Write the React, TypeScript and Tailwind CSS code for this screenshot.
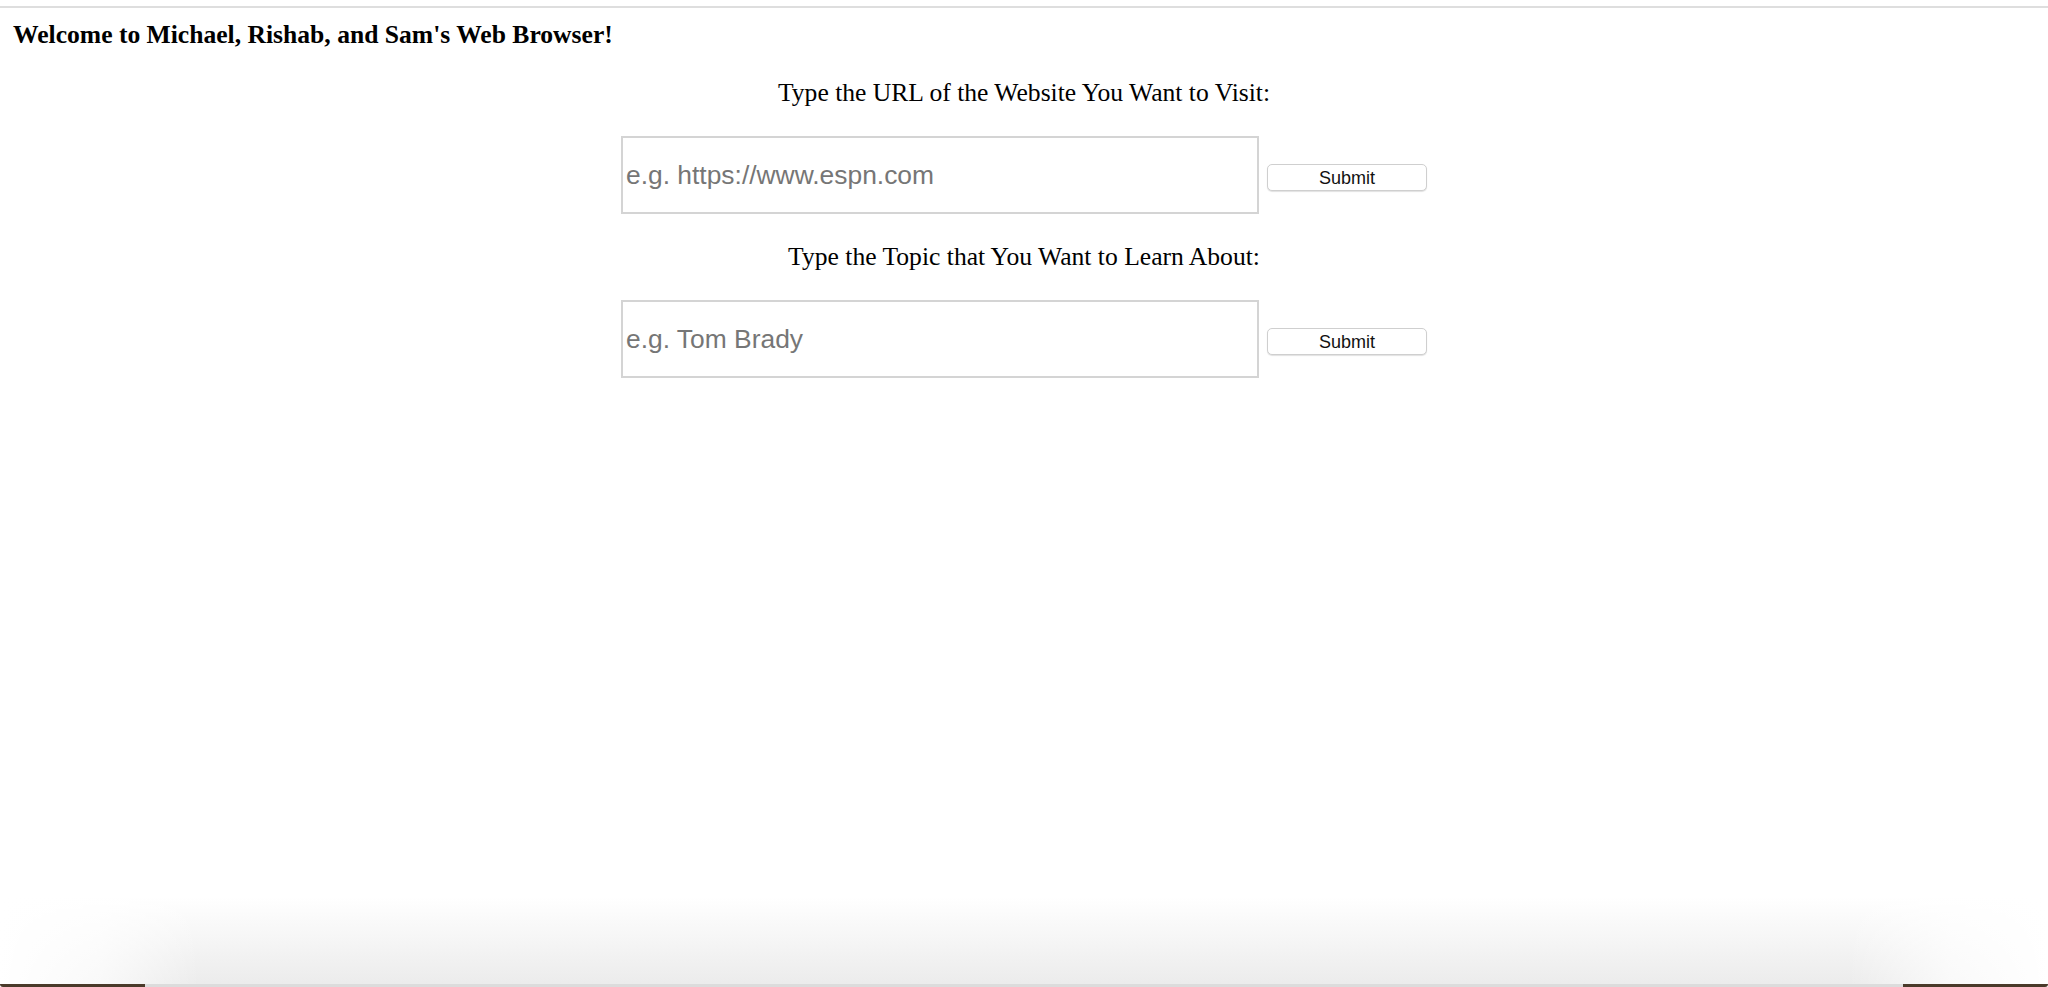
import React, { useState } from 'react';

const serif = "font-['Liberation_Serif','Times_New_Roman',serif]";
const sans = "font-['Liberation_Sans',Arial,sans-serif]";

interface SearchRowProps {
  label: string;
  placeholder: string;
  value: string;
  onChange: (v: string) => void;
  onSubmit: () => void;
}

const SearchRow: React.FC<SearchRowProps> = ({ label, placeholder, value, onChange, onSubmit }) => {
  return (
    <div className="flex flex-col items-center">
      <label className={`${serif} text-[25.6px] leading-[30px] text-black`}>{label}</label>
      <div className="flex items-center gap-[8px] mt-[28px]">
        <input
          type="text"
          placeholder={placeholder}
          value={value}
          onChange={(e) => onChange(e.target.value)}
          className={`${sans} w-[638px] h-[78px] border-2 border-[#d4d4d4] px-[3px] text-[26.4px] text-black placeholder:text-[#767676] outline-none`}
        />
        <button
          type="button"
          onClick={onSubmit}
          className={`${sans} mt-[5px] w-[160px] h-[27px] rounded-[5px] border border-[#cfcfcf] bg-white text-[18px] leading-none text-[#111] shadow-[0_1px_1px_rgba(0,0,0,0.12)]`}
        >
          Submit
        </button>
      </div>
    </div>
  );
};

const App: React.FC = () => {
  const [url, setUrl] = useState('');
  const [topic, setTopic] = useState('');

  return (
    <div className="relative min-h-screen bg-white overflow-hidden">
      <div className="h-[6px]" />
      <div className="h-[2px] bg-[#dedede]" />
      <h1 className={`${serif} font-bold text-[25.6px] leading-[30px] text-black pl-[13px] pt-[12px]`}>
        Welcome to Michael, Rishab, and Sam's Web Browser!
      </h1>
      <div className="flex flex-col gap-[28px] mt-[28px]">
        <SearchRow
          label="Type the URL of the Website You Want to Visit:"
          placeholder="e.g. https://www.espn.com"
          value={url}
          onChange={setUrl}
          onSubmit={() => {}}
        />
        <SearchRow
          label="Type the Topic that You Want to Learn About:"
          placeholder="e.g. Tom Brady"
          value={topic}
          onChange={setTopic}
          onSubmit={() => {}}
        />
      </div>

      {/* window shadow at the bottom edge */}
      <div className="pointer-events-none absolute bottom-0 left-0 right-0 h-[90px] bg-gradient-to-b from-white to-[#ebebeb]" />
      <div className="pointer-events-none absolute bottom-0 left-0 h-[90px] w-[200px] bg-gradient-to-r from-white via-white/70 to-transparent" />
      <div className="pointer-events-none absolute bottom-0 right-0 h-[90px] w-[200px] bg-gradient-to-l from-white via-white/70 to-transparent" />
      <div className="pointer-events-none absolute bottom-0 left-0 right-0 h-[3px] flex">
        <div className="w-[145px] bg-[#4a3a2a] rounded-bl-[4px]" />
        <div className="flex-1 bg-[#dcdcdc]" />
        <div className="w-[145px] bg-[#4a3a2a] rounded-br-[4px]" />
      </div>
    </div>
  );
};

export default App;
